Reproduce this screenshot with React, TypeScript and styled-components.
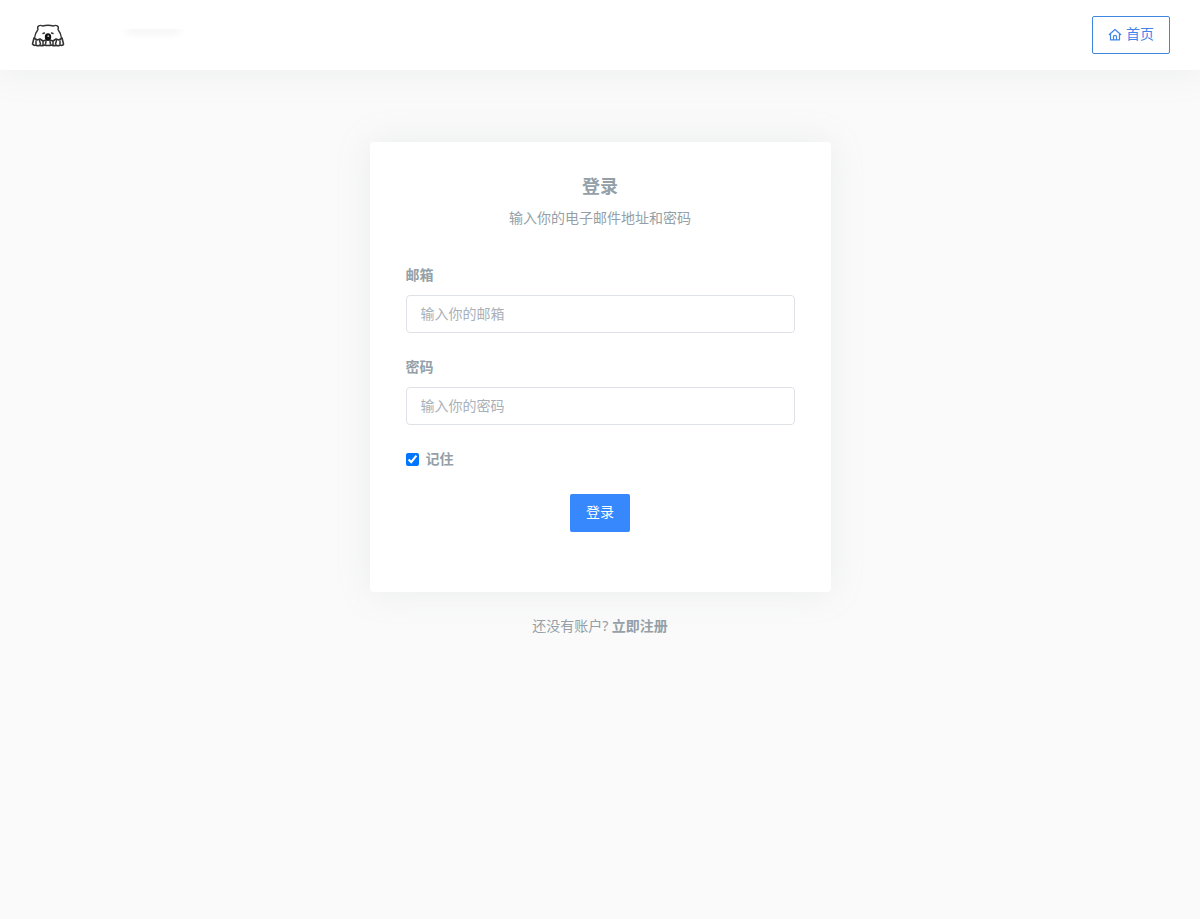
import React from "react";
import styled, { createGlobalStyle } from "styled-components";

const GlobalStyle = createGlobalStyle`
  *, *::before, *::after { box-sizing: border-box; }
  body {
    margin: 0;
    background: #fafafa;
    color: #949fa7;
    font-family: "Noto Sans", "Noto Sans CJK SC", sans-serif;
    font-size: 14px;
    line-height: 22px;
  }
  button, input { font: inherit; }
`;

const Header = styled.header`
  display: flex;
  align-items: center;
  height: 70px;
  padding: 0 30px;
  background: #fff;
  box-shadow: 0 0 35px 0 rgba(154, 161, 171, 0.15);
`;

const Brand = styled.a`
  display: flex;
  width: 36px;
  margin-right: 52px;
`;

const MenuEdge = styled.div`
  width: 70px;
  height: 12px;
  overflow: hidden;
  &::before {
    content: "";
    display: block;
    height: 6px;
    margin: -6px 8px 0;
    box-shadow: 0 4px 8px rgba(0, 0, 0, 0.06);
  }
`;

const HomeButton = styled.button`
  display: flex;
  align-items: center;
  gap: 4px;
  height: 38px;
  margin-left: auto;
  padding: 0 15px 2px;
  border: 1px solid #3f86de;
  border-radius: 2px;
  background: transparent;
  color: #3f86e8;
  cursor: pointer;
  svg { margin-top: 2px; }
`;

const Main = styled.main`
  display: flex;
  flex-direction: column;
  align-items: center;
  padding: 72px 12px 24px;
`;

const Card = styled.section`
  width: 100%;
  max-width: 461px;
  padding: 33px 36px 60px;
  border-radius: 4px;
  background: #fff;
  box-shadow: 0 0 35px 0 rgba(154, 161, 171, 0.15);
`;

const Title = styled.h1`
  margin: 0 0 10px;
  font-size: 18px;
  line-height: 22px;
  text-align: center;
`;

const Subtitle = styled.p`
  margin: 0 0 35px;
  text-align: center;
`;

const Field = styled.div`
  display: flex;
  flex-direction: column;
  gap: 9px;
  margin-bottom: 23px;
`;

const Label = styled.label`
  font-weight: 700;
`;

const TextInput = styled.input`
  width: 100%;
  height: 38px;
  padding: 0 14px 2px;
  border: 1px solid #dee2e6;
  border-radius: 4px;
  background: #fff;
  color: #6c757d;
  &::placeholder { color: #a9b0b8; opacity: 1; }
`;

const Remember = styled.div`
  display: flex;
  align-items: center;
  gap: 7px;
  margin-bottom: 24px;
  input { width: 13px; height: 13px; margin: 0; }
`;

const Submit = styled.button`
  display: block;
  height: 38px;
  margin: 0 auto;
  padding: 0 16px 2px;
  border: 0;
  border-radius: 2px;
  background: #3688fc;
  color: #fff;
  cursor: pointer;
`;

const Footer = styled.p`
  margin: 23px 0 0;
  a { color: inherit; font-weight: 700; text-decoration: none; }
`;

const BearLogo = () => (
  <svg width="36" height="28" viewBox="0 0 36 28" fill="none" stroke="#333" strokeLinejoin="round" strokeLinecap="round">
    <path strokeWidth="1.4" d="M4.500 17C5 14 6 11 8 8.500C6.500 5 10 3.500 12.500 5Q18 3.500 23.500 5C26 3.500 29.500 5 28 8.500C30 11 31 14 31.500 17" />
    <path fill="#fff" strokeWidth="1.6" d="M4 17L2.500 23Q4 25 6 24Q8 25.500 10 24Q12 25.500 14 24Q18 25 22 24Q24 25.500 26 24Q28 25.500 30 24Q33 25 33.500 23L32 17L29 19L26 18L23 20L20 19H16L13 20L10 18L7 19Z" />
    <path strokeWidth="1.5" d="M6 20V23M9.500 19.500L10.500 23M13 20.500V24M16 20.500L15.500 23M20 20.500L20.500 23M23 20.500V24M26.500 19.500L25.500 23M30 20V23" />
    <ellipse cx="18" cy="16" rx="3.200" ry="3.700" fill="#111" stroke="none" />
    <circle cx="18.300" cy="15.200" r="0.900" fill="#bbb" stroke="none" />
    <path strokeWidth="1.4" d="M13 12.500L14.500 12M21.500 12L23 12.500" />
  </svg>
);

const HomeIcon = () => (
  <svg width="14" height="14" viewBox="0 0 14 14" fill="none" stroke="currentColor" strokeWidth="1.2" strokeLinejoin="round" strokeLinecap="round">
    <path d="M1.300 6.500L7 1.500L12.700 6.500M2.500 6V11.800H11.500V6M5.500 11.800V8.500Q5.500 7.300 7 7.300Q8.500 7.300 8.500 8.500V11.800" />
  </svg>
);

export default function App() {
  return (
    <>
      <GlobalStyle />
      <Header>
        <Brand href="#" aria-label="Home"><BearLogo /></Brand>
        <MenuEdge />
        <HomeButton type="button"><HomeIcon />首页</HomeButton>
      </Header>
      <Main>
        <Card>
          <Title>登录</Title>
          <Subtitle>输入你的电子邮件地址和密码</Subtitle>
          <form onSubmit={(e) => e.preventDefault()}>
            <Field>
              <Label htmlFor="email">邮箱</Label>
              <TextInput id="email" type="email" placeholder="输入你的邮箱" />
            </Field>
            <Field>
              <Label htmlFor="password">密码</Label>
              <TextInput id="password" type="password" placeholder="输入你的密码" />
            </Field>
            <Remember>
              <input id="remember" type="checkbox" defaultChecked />
              <Label htmlFor="remember">记住</Label>
            </Remember>
            <Submit type="submit">登录</Submit>
          </form>
        </Card>
        <Footer>还没有账户? <a href="#register">立即注册</a></Footer>
      </Main>
    </>
  );
}
